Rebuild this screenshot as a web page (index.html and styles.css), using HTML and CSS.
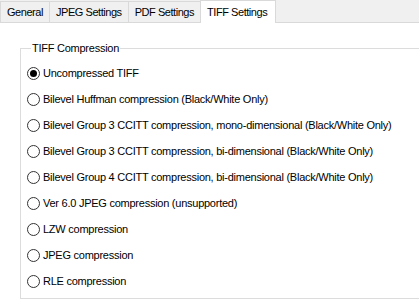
FILE: index.html
```html
<!DOCTYPE html>
<html lang="en">
<head>
  <meta charset="UTF-8" />
  <title>TIFF Settings</title>
  <link rel="stylesheet" href="styles.css">
</head>
<body>
  <div class="tabs">
    <div class="tab">General</div>
    <div class="tab">JPEG Settings</div>
    <div class="tab">PDF Settings</div>
    <div class="tab active">TIFF Settings</div>
  </div>

  <div class="page">
    <fieldset class="group">
      <legend>TIFF Compression</legend>
      <label class="option"><span class="radio checked"></span>Uncompressed TIFF</label>
      <label class="option"><span class="radio"></span>Bilevel Huffman compression (Black/White Only)</label>
      <label class="option"><span class="radio"></span>Bilevel Group 3 CCITT compression, mono-dimensional (Black/White Only)</label>
      <label class="option"><span class="radio"></span>Bilevel Group 3 CCITT compression, bi-dimensional (Black/White Only)</label>
      <label class="option"><span class="radio"></span>Bilevel Group 4 CCITT compression, bi-dimensional (Black/White Only)</label>
      <label class="option"><span class="radio"></span>Ver 6.0 JPEG compression (unsupported)</label>
      <label class="option"><span class="radio"></span>LZW compression</label>
      <label class="option"><span class="radio"></span>JPEG compression</label>
      <label class="option"><span class="radio"></span>RLE compression</label>
    </fieldset>
  </div>
</body>
</html>
```

FILE: styles.css
```css
* {
  margin: 0;
  padding: 0;
  box-sizing: border-box;
}

body {
  font-family: 'Liberation Sans', Arial, sans-serif;
  font-size: 11px;
  letter-spacing: -0.25px;
  color: #000;
  background: #fff;
  width: 419px;
  height: 300px;
  overflow: hidden;
  white-space: nowrap;
}

.tabs {
  display: flex;
  align-items: flex-end;
  height: 23px;
  background: #f0f0f0;
  border-bottom: 1px solid #d9d9d9;
}

.tab {
  height: 21px;
  padding: 4px 6px 0 6px;
  border: 1px solid #d9d9d9;
  border-bottom: none;
  margin-right: -1px;
  background: #f0f0f0;
  letter-spacing: -0.45px;
}

.tab.active {
  position: relative;
  height: 23px;
  margin-bottom: -1px;
  padding-top: 5px;
  padding-right: 8px;
  background: #fff;
  z-index: 1;
}

.page {
  padding: 19px 0 0 20px;
}

.group {
  width: 399px;
  height: 257px;
  border: 1px solid #dcdcdc;
  border-right: none;
  padding: 6px 0 0 6px;
  display: flex;
  flex-direction: column;
}

.group legend {
  padding: 0 1px;
  margin-left: 4px;
}

.option {
  display: flex;
  align-items: center;
  height: 26px;
}

.radio {
  width: 13px;
  height: 13px;
  border: 1px solid #333;
  border-radius: 50%;
  margin-right: 3px;
  display: flex;
  align-items: center;
  justify-content: center;
  background: #fff;
}

.radio.checked::after {
  content: "";
  width: 7px;
  height: 7px;
  border-radius: 50%;
  background: #000;
}
```
